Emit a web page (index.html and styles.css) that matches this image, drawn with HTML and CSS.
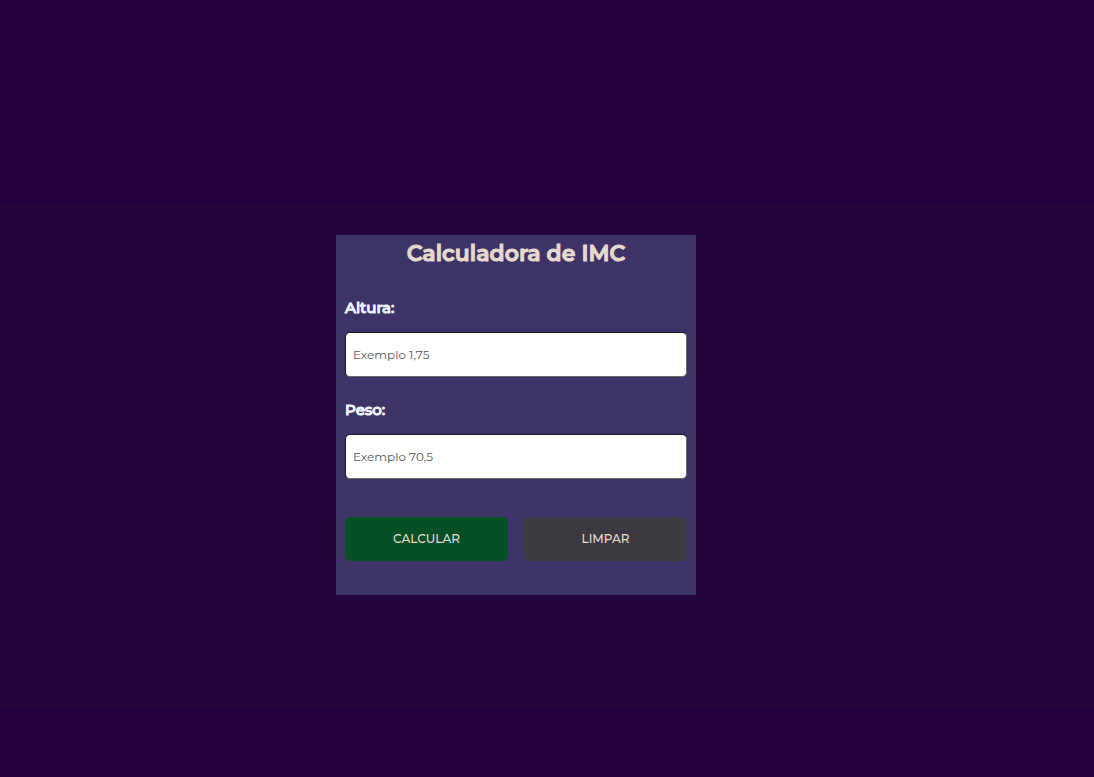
FILE: index.html
```html
<!DOCTYPE html>
<html lang="pt-BR">
<head>
  <meta charset="utf-8">
  <meta name="viewport" content="width=device-width, initial-scale=1">
  <title>Calculadora de IMC</title>
  <link rel="stylesheet" href="styles.css">
</head>
<body>
  <main class="band">
    <form class="card">
      <h1 class="title">Calculadora de IMC</h1>
      <div class="field">
        <label class="label" for="altura">Altura:</label>
        <input class="input" id="altura" type="text" placeholder="Exemplo 1,75">
      </div>
      <div class="field">
        <label class="label" for="peso">Peso:</label>
        <input class="input" id="peso" type="text" placeholder="Exemplo 70,5">
      </div>
      <div class="actions">
        <button class="button button-primary" type="button">CALCULAR</button>
        <button class="button button-reset" type="reset">LIMPAR</button>
      </div>
    </form>
  </main>
</body>
</html>
```
FILE: styles.css
```css
* {
  box-sizing: border-box;
}

body {
  margin: 0;
  min-height: 100vh;
  padding-top: 202px;
  background: #250041;
  font-family: Montserrat, Inter, sans-serif;
}

.band {
  display: flex;
  justify-content: center;
  padding: 33px 62px 115px 0;
  background: #24063d;
}

.card {
  width: 100%;
  max-width: 360px;
  padding: 5px 9px 34px;
  background: #3e3367;
}

.title {
  margin: 0 0 27px;
  color: #e6dace;
  font-size: 22px;
  font-weight: 600;
  -webkit-text-stroke: 1px currentColor;
  line-height: 28px;
  text-align: center;
}

.field {
  margin-bottom: 20px;
}

.label {
  display: block;
  margin-bottom: 12px;
  color: #f0f8ff;
  font-size: 15px;
  font-weight: 500;
  -webkit-text-stroke: 1px currentColor;
  line-height: 25px;
}

.input {
  display: block;
  width: 100%;
  height: 45px;
  padding: 0 7px;
  border: 1px solid;
  border-color: #1c1724 #6b6b6b #6b6b6b #1c1724;
  border-radius: 5px;
  background: #fff;
  color: #222;
  font-family: inherit;
  font-size: 12px;
}

.input::placeholder {
  color: #555;
}

.actions {
  display: flex;
  gap: 16px;
  margin-top: 38px;
}

.button {
  flex: 1;
  height: 44px;
  padding: 0 0 1px;
  border: 0;
  border-radius: 5px;
  color: #e6dace;
  font-family: inherit;
  font-size: 12px;
  font-weight: 500;
}

.button-primary {
  background: #055024;
}

.button-reset {
  background: #3c3a41;
}
```
